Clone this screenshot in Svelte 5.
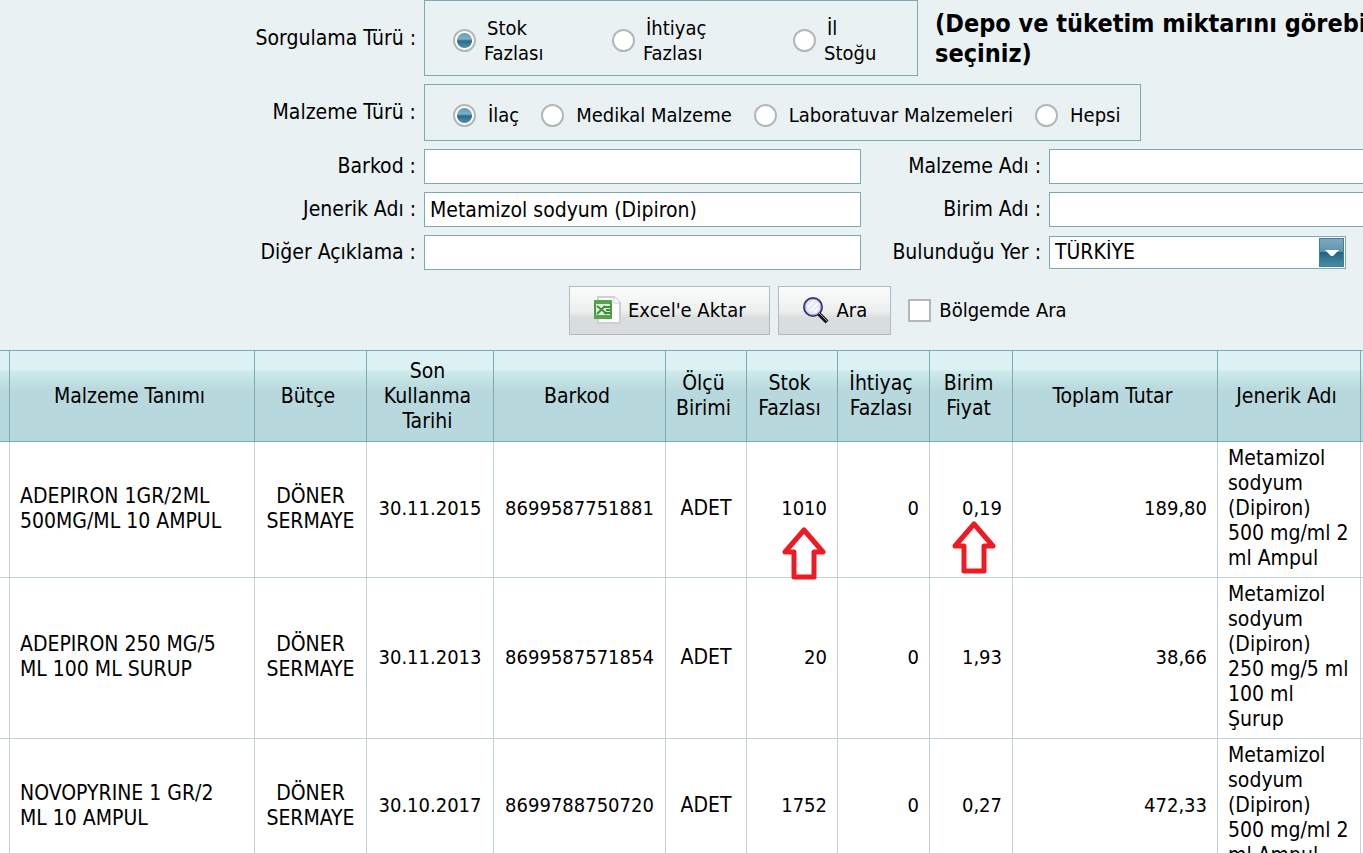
<script>
  const queryTypes = [
    { id: 'fazla', label: 'Stok\nFazlası' },
    { id: 'ihtiyac', label: 'İhtiyaç\nFazlası' },
    { id: 'il', label: 'İl\nStoğu' }
  ]

  const materialTypes = [
    { id: 'ilac', label: 'İlaç' },
    { id: 'medikal', label: 'Medikal Malzeme' },
    { id: 'lab', label: 'Laboratuvar Malzemeleri' },
    { id: 'hepsi', label: 'Hepsi' }
  ]

  const columns = [
    { key: 'pick', title: '' },
    { key: 'name', title: 'Malzeme Tanımı' },
    { key: 'budget', title: 'Bütçe' },
    { key: 'expiry', title: 'Son\nKullanma\nTarihi' },
    { key: 'barcode', title: 'Barkod' },
    { key: 'unit', title: 'Ölçü\nBirimi' },
    { key: 'surplus', title: 'Stok\nFazlası' },
    { key: 'need', title: 'İhtiyaç\nFazlası' },
    { key: 'price', title: 'Birim\nFiyat' },
    { key: 'total', title: 'Toplam Tutar' },
    { key: 'generic', title: 'Jenerik Adı' },
    { key: 'more', title: '' }
  ]

  const rows = [
    {
      name: 'ADEPIRON 1GR/2ML\n500MG/ML 10 AMPUL',
      budget: 'DÖNER\nSERMAYE',
      expiry: '30.11.2015',
      barcode: '8699587751881',
      unit: 'ADET',
      surplus: '1010',
      need: '0',
      price: '0,19',
      total: '189,80',
      generic: 'Metamizol\nsodyum\n(Dipiron)\n500 mg/ml 2\nml Ampul',
      marked: ['surplus', 'price']
    },
    {
      name: 'ADEPIRON 250 MG/5\nML 100 ML SURUP',
      budget: 'DÖNER\nSERMAYE',
      expiry: '30.11.2013',
      barcode: '8699587571854',
      unit: 'ADET',
      surplus: '20',
      need: '0',
      price: '1,93',
      total: '38,66',
      generic: 'Metamizol\nsodyum\n(Dipiron)\n250 mg/5 ml\n100 ml\nŞurup'
    },
    {
      name: 'NOVOPYRINE 1 GR/2\nML 10 AMPUL',
      budget: 'DÖNER\nSERMAYE',
      expiry: '30.10.2017',
      barcode: '8699788750720',
      unit: 'ADET',
      surplus: '1752',
      need: '0',
      price: '0,27',
      total: '472,33',
      generic: 'Metamizol\nsodyum\n(Dipiron)\n500 mg/ml 2\nml Ampul'
    }
  ]

  let queryType = 'fazla'
  let materialType = 'ilac'
  let barcode = ''
  let materialName = ''
  let genericName = 'Metamizol sodyum (Dipiron)'
  let unitName = ''
  let note = ''
  let place = 'TÜRKİYE'
  let onlyRegion = false
</script>

<div class="page">
  <form class="filters" on:submit|preventDefault>
    <div class="line">
      <span class="caption" id="query-caption">Sorgulama Türü :</span>
      <div class="options query" role="radiogroup" aria-labelledby="query-caption">
        {#each queryTypes as type}
          <div class="option">
            <input type="radio" id="q-{type.id}" name="query" value={type.id} bind:group={queryType} />
            <label for="q-{type.id}">{type.label}</label>
          </div>
        {/each}
      </div>
      <strong class="hint">(Depo ve tüketim miktarını görebi<br />seçiniz)</strong>
    </div>

    <div class="line">
      <span class="caption" id="material-caption">Malzeme Türü :</span>
      <div class="options material" role="radiogroup" aria-labelledby="material-caption">
        {#each materialTypes as type}
          <div class="option">
            <input type="radio" id="m-{type.id}" name="material" value={type.id} bind:group={materialType} />
            <label for="m-{type.id}">{type.label}</label>
          </div>
        {/each}
      </div>
    </div>

    <div class="fields">
      <label class="caption" for="barcode">Barkod :</label>
      <input class="text" id="barcode" type="text" bind:value={barcode} />
      <label class="caption" for="material-name">Malzeme Adı :</label>
      <input class="text" id="material-name" type="text" bind:value={materialName} />

      <label class="caption" for="generic-name">Jenerik Adı :</label>
      <input class="text" id="generic-name" type="text" bind:value={genericName} />
      <label class="caption" for="unit-name">Birim Adı :</label>
      <input class="text" id="unit-name" type="text" bind:value={unitName} />

      <label class="caption" for="note">Diğer Açıklama :</label>
      <input class="text" id="note" type="text" bind:value={note} />
      <label class="caption" for="place">Bulunduğu Yer :</label>
      <div class="select">
        <select id="place" bind:value={place}>
          <option>TÜRKİYE</option>
        </select>
        <span class="arrow">
          <svg width="14" height="8" viewBox="0 0 14 8"><path d="M0 1h14L8 7H6z" fill="#fff" /></svg>
        </span>
      </div>
    </div>

    <div class="actions">
      <button type="button">
        <svg width="28" height="32" viewBox="0 0 28 32">
          <path d="M5 2h16l6 6v20H5z" fill="#fbfcfd" stroke="#cdd1d6" stroke-width="2" />
          <path d="M21 2v6h6" fill="#fff" stroke="#cdd1d6" />
          <rect x="2" y="6" width="16" height="17" fill="#dff0da" stroke="#4a9a45" stroke-width="2" />
          <path d="M1 7h18M1 22h18" stroke="#55a34d" stroke-width="4" />
          <path d="M4 11l10 8M12 11L4 19M11 12h6M13 15h4M11 18h6" fill="none" stroke="#3f8f3c" stroke-width="2" />
        </svg>
        Excel'e Aktar
      </button>
      <button type="button">
        <svg width="28" height="32" viewBox="0 0 28 32">
          <circle cx="11" cy="12" r="9" fill="#e3e6f6" stroke="#34345c" stroke-width="2" />
          <circle cx="11" cy="12" r="8" fill="none" stroke="#8f93dc" />
          <path d="M6 12l6-6M8 16l8-8M12 17l4-4" stroke="#fafaff" stroke-width="2" />
          <path d="M17 19l8 8" stroke="#15151d" stroke-width="4" />
          <path d="M17 18l8 8" stroke="#a3a3ad" />
        </svg>
        Ara
      </button>
      <div class="region">
        <input type="checkbox" id="region" bind:checked={onlyRegion} />
        <label for="region">Bölgemde Ara</label>
      </div>
    </div>
  </form>

  <table>
    <colgroup>
      {#each columns as col}
        <col class="col-{col.key}" />
      {/each}
    </colgroup>
    <thead>
      <tr>
        {#each columns as col}
          <th>{col.title}</th>
        {/each}
      </tr>
    </thead>
    <tbody>
      {#each rows as row}
        <tr>
          {#each columns as col}
            <td class={col.key}>
              {#if row.marked?.includes(col.key)}
                <span class="marked">{row[col.key]}<svg class="marker" width="46" height="54" viewBox="0 0 46 54">
                    <path d="M23 3L42 25H33V50H13V25H4Z" fill="#fff" stroke="#ed1c24" stroke-width="5" stroke-linejoin="round" />
                  </svg></span>
              {:else}{row[col.key] ?? ''}{/if}
            </td>
          {/each}
        </tr>
      {/each}
    </tbody>
  </table>
</div>

<style>
  :global(body) { background: #fff; overflow: hidden; }

  .page {
    height: 100vh;
    overflow: hidden;
    font: 21px/25px "DejaVu Sans Condensed", Tahoma, "Noto Sans", sans-serif;
    color: #000;
  }

  .page * { box-sizing: border-box; }

  .filters {
    display: flex;
    flex-direction: column;
    gap: 8px;
    padding-bottom: 15px;
    background: #e9f1f3;
  }

  .line { display: flex; align-items: center; gap: 8px; }
  .line .caption { flex: none; width: 416px; }
  .caption { text-align: right; white-space: nowrap; }

  .options {
    flex: none;
    display: flex;
    align-items: center;
    padding: 5px 20px 0 28px;
    border: 1px solid #7caab2;
    font-size: 20px;
  }
  .query {
    display: grid;
    grid-template-columns: 159px 181px auto;
    width: 494px;
    height: 76px;
  }
  .material { gap: 22px; height: 57px; }

  .option { display: flex; align-items: center; gap: 8px; }
  .material .option { gap: 9px; }
  .option label { white-space: pre; text-indent: 3px; }

  input[type="radio"], input[type="checkbox"] {
    appearance: none;
    flex: none;
    width: 23px;
    height: 23px;
    margin: 0;
    border: 2px solid #b4b7b8;
    background: #fff;
  }
  input[type="radio"] { border-radius: 50%; }
  input[type="radio"]:checked {
    background: radial-gradient(circle, transparent 7px, #fff 8px),
      linear-gradient(#6a9db5 2px, #7fb0c4 8px, #2c6a86 10px, #4f93b0 17px);
  }

  .hint {
    align-self: flex-start;
    padding: 9px 0 0 9px;
    font-size: 25px;
    line-height: 30px;
    white-space: nowrap;
  }

  .fields {
    display: grid;
    grid-template-columns: 416px 437px 172px 1fr;
    gap: 8px;
    align-items: center;
  }

  .text, select {
    width: 100%;
    height: 35px;
    padding: 0 5px;
    border: 1px solid #7caab2;
    border-radius: 0;
    background: #fff;
    color: #000;
    font: inherit;
  }
  .fields > .text:nth-child(4n) { border-right: none; }

  .select { position: relative; width: 297px; }
  select { appearance: none; display: block; height: 33px; }

  .arrow {
    position: absolute;
    top: 2px;
    right: 2px;
    display: grid;
    place-items: center;
    width: 25px;
    height: 29px;
    border: 1px solid #3c7f9b;
    background: linear-gradient(#7fa9bd, #5c93ad 48%, #1f6684 50%, #4a8ba6);
    pointer-events: none;
  }

  .actions {
    display: flex;
    align-items: center;
    gap: 8px;
    padding: 8px 0 0 569px;
    font-size: 20px;
  }

  button {
    display: flex;
    align-items: center;
    gap: 7px;
    height: 49px;
    padding: 0 23px;
    border: 1px solid #b1bbbf;
    background: linear-gradient(#fafbfb, #eef0f0 50%, #dadedf 65%, #d8dcdd);
    color: #000;
    font: inherit;
    white-space: nowrap;
  }

  .region { display: flex; align-items: center; gap: 8px; padding-left: 9px; }

  table {
    width: 100%;
    table-layout: fixed;
    border-spacing: 0;
    background: #fff;
  }
  .col-pick { width: 10px; }
  .col-budget { width: 112px; }
  .col-expiry { width: 127px; }
  .col-barcode { width: 172px; }
  .col-unit { width: 81px; }
  .col-surplus { width: 91px; }
  .col-need { width: 92px; }
  .col-price { width: 83px; }
  .col-total { width: 205px; }
  .col-generic { width: 143px; }
  .col-more { width: 2px; }

  th {
    height: 92px;
    padding: 0 5px 0 0;
    border: solid #7caab2;
    border-width: 1px 1px 1px 0;
    background: linear-gradient(#dcf1f3 19px, #cdeaec 20px, #b7d8dc 40px);
    font-weight: normal;
    white-space: pre;
  }

  td {
    padding: 4px 10px 6px;
    border: solid #c1d3d8;
    border-width: 0 1px 1px 0;
    font-size: 20px;
    text-align: right;
    white-space: pre;
  }
  td.name, td.generic { font-size: 21px; text-align: left; }
  td.budget, td.unit { font-size: 21px; }
  td.budget, td.expiry, td.barcode, td.unit { padding: 4px 0 6px; text-align: center; }
  th:first-child, th:last-child, td.pick, td.more { padding: 0; }
  th:last-child, td:last-child { border-right: none; }

  .marked { position: relative; }

  /* hand-drawn arrows pointing at the values */
  .marker { position: absolute; top: 31px; left: 0; }
  .price .marker { top: 25px; left: -11px; }
</style>
